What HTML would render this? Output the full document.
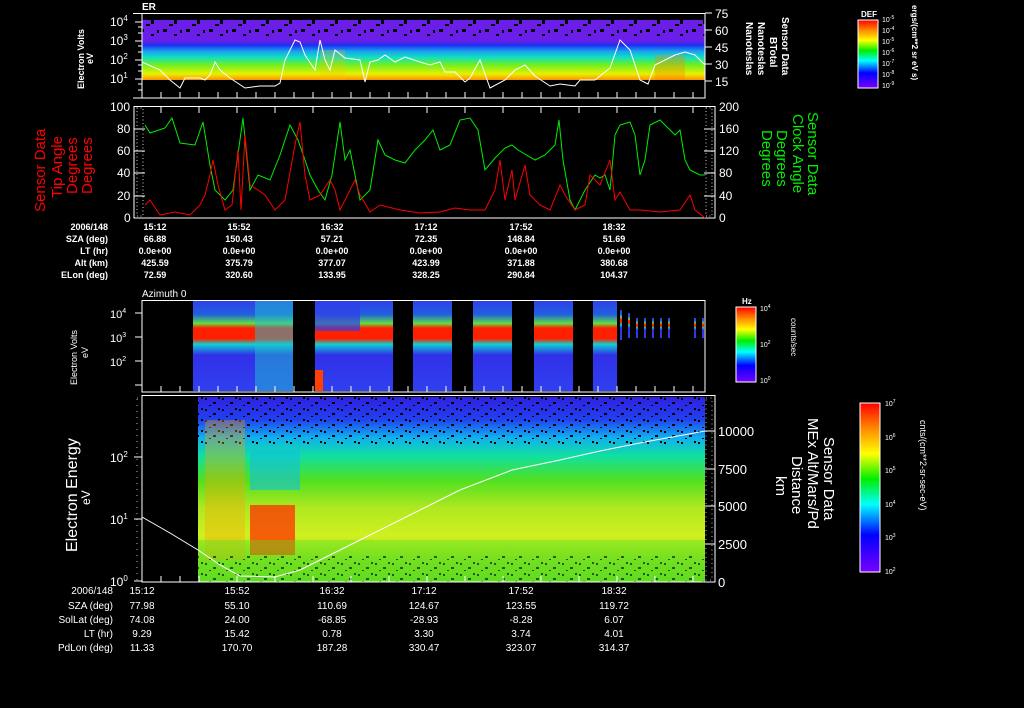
<!DOCTYPE html>
<html><head><meta charset="utf-8"><style>
html,body{margin:0;padding:0;background:#000;width:1024px;height:708px;overflow:hidden}
svg{display:block}
text{font-family:"Liberation Sans",sans-serif;fill:#fff}
</style></head><body>
<svg width="1024" height="708" viewBox="0 0 1024 708" xmlns="http://www.w3.org/2000/svg">
<defs>
<linearGradient id="jet" x1="0" y1="0" x2="0" y2="1">
<stop offset="0" stop-color="#f00"/><stop offset=".15" stop-color="#f80"/><stop offset=".3" stop-color="#ff0"/><stop offset=".45" stop-color="#0e0"/><stop offset=".6" stop-color="#0ff"/><stop offset=".78" stop-color="#00f"/><stop offset="1" stop-color="#70f"/>
</linearGradient>
<linearGradient id="p1" x1="0" y1="0" x2="0" y2="1">
<stop offset="0" stop-color="#6a1ee8"/><stop offset=".35" stop-color="#6a1ee8"/><stop offset=".42" stop-color="#1a30f0"/><stop offset=".52" stop-color="#1aa0f0"/><stop offset=".62" stop-color="#10e0c0"/><stop offset=".75" stop-color="#70f020"/><stop offset=".9" stop-color="#e8f000"/><stop offset="1" stop-color="#ff9000"/>
</linearGradient>
<linearGradient id="p4" x1="0" y1="0" x2="0" y2="1">
<stop offset="0" stop-color="#3020e0"/><stop offset=".12" stop-color="#2040f0"/><stop offset=".22" stop-color="#10b0f0"/><stop offset=".32" stop-color="#10e0a0"/><stop offset=".45" stop-color="#50e020"/><stop offset=".6" stop-color="#b0e820"/><stop offset=".75" stop-color="#d0f020"/><stop offset=".88" stop-color="#80e020"/><stop offset="1" stop-color="#60d820"/>
</linearGradient>
<linearGradient id="p3" x1="0" y1="0" x2="0" y2="1">
<stop offset="0" stop-color="#3040e8"/><stop offset=".15" stop-color="#2060e0"/><stop offset=".25" stop-color="#60e040"/><stop offset=".3" stop-color="#ff2000"/><stop offset=".42" stop-color="#ff2000"/><stop offset=".48" stop-color="#10d0d0"/><stop offset=".6" stop-color="#3030e8"/><stop offset="1" stop-color="#3040f0"/>
</linearGradient>
<pattern id="spk" width="23" height="14" patternUnits="userSpaceOnUse">
<rect x="2" y="1" width="4" height="3" fill="#000"/><rect x="13" y="6" width="3" height="4" fill="#000"/><rect x="8" y="10" width="4" height="2" fill="#000"/><rect x="19" y="2" width="2" height="3" fill="#000"/>
</pattern>
<pattern id="spk2" width="17" height="11" patternUnits="userSpaceOnUse">
<rect x="1" y="2" width="2" height="2" fill="#000"/><rect x="9" y="6" width="3" height="2" fill="#000"/><rect x="14" y="1" width="2" height="2" fill="#000"/><rect x="5" y="9" width="2" height="1" fill="#000"/>
</pattern>
</defs>

<!-- Panel 1 -->
<text x="142" y="10" font-size="10" font-weight="bold">ER</text>
<rect x="142" y="20" width="563" height="60" fill="url(#p1)"/>
<rect x="142" y="16" width="563" height="20" fill="url(#spk)"/>
<rect x="142" y="13" width="563" height="5" fill="#000" opacity=".5"/>
<rect x="320" y="50" width="25" height="30" fill="#ffc000" opacity=".25"/>
<rect x="655" y="55" width="30" height="25" fill="#ff8000" opacity=".35"/>
<polyline fill="none" stroke="#fff" stroke-width="1" points="142,62 160,70 170,80 180,88 185,78 200,78 205,80 210,75 215,62 220,70 230,78 245,88 260,86 275,86 280,83 285,60 295,40 300,42 305,55 315,70 320,40 325,60 330,70 335,50 345,58 360,60 365,82 370,62 378,60 385,55 395,62 405,57 420,62 430,65 440,62 445,72 455,72 465,82 470,78 480,60 490,88 505,80 515,70 525,65 535,76 550,86 560,84 575,86 580,80 595,80 610,68 620,40 630,50 640,80 648,84 655,65 665,60 675,55 685,52 695,55 705,65"/>
<rect x="142" y="13.5" width="563" height="84.5" fill="none" stroke="#fff"/>
<g stroke="#fff">
<line x1="133" y1="13.5" x2="142" y2="13.5"/><line x1="133" y1="98" x2="142" y2="98"/>
<line x1="135" y1="22" x2="142" y2="22"/><line x1="135" y1="41" x2="142" y2="41"/><line x1="135" y1="60" x2="142" y2="60"/><line x1="135" y1="79" x2="142" y2="79"/>
<line x1="138" y1="27" x2="142" y2="27"/><line x1="138" y1="33" x2="142" y2="33"/><line x1="138" y1="46" x2="142" y2="46"/><line x1="138" y1="52" x2="142" y2="52"/><line x1="138" y1="65" x2="142" y2="65"/><line x1="138" y1="71" x2="142" y2="71"/><line x1="138" y1="84" x2="142" y2="84"/><line x1="138" y1="90" x2="142" y2="90"/>
<line x1="705" y1="13" x2="712" y2="13"/><line x1="705" y1="30" x2="712" y2="30"/><line x1="705" y1="47" x2="712" y2="47"/><line x1="705" y1="64" x2="712" y2="64"/><line x1="705" y1="81" x2="712" y2="81"/>
</g>
<g stroke="#fff"><line x1="161" y1="98" x2="161" y2="92"/><line x1="180" y1="98" x2="180" y2="92"/><line x1="199" y1="98" x2="199" y2="92"/><line x1="218" y1="98" x2="218" y2="92"/><line x1="237" y1="98" x2="237" y2="92"/><line x1="256" y1="98" x2="256" y2="92"/><line x1="275" y1="98" x2="275" y2="92"/><line x1="294" y1="98" x2="294" y2="92"/><line x1="313" y1="98" x2="313" y2="92"/><line x1="332" y1="98" x2="332" y2="92"/><line x1="351" y1="98" x2="351" y2="92"/><line x1="370" y1="98" x2="370" y2="92"/><line x1="389" y1="98" x2="389" y2="92"/><line x1="408" y1="98" x2="408" y2="92"/><line x1="427" y1="98" x2="427" y2="92"/><line x1="446" y1="98" x2="446" y2="92"/><line x1="465" y1="98" x2="465" y2="92"/><line x1="484" y1="98" x2="484" y2="92"/><line x1="503" y1="98" x2="503" y2="92"/><line x1="522" y1="98" x2="522" y2="92"/><line x1="541" y1="98" x2="541" y2="92"/><line x1="560" y1="98" x2="560" y2="92"/><line x1="579" y1="98" x2="579" y2="92"/><line x1="598" y1="98" x2="598" y2="92"/><line x1="617" y1="98" x2="617" y2="92"/><line x1="636" y1="98" x2="636" y2="92"/><line x1="655" y1="98" x2="655" y2="92"/><line x1="674" y1="98" x2="674" y2="92"/><line x1="693" y1="98" x2="693" y2="92"/></g>
<g font-size="12"><text x="110" y="26">10<tspan font-size="8" dy="-5">4</tspan></text><text x="110" y="45">10<tspan font-size="8" dy="-5">3</tspan></text><text x="110" y="64">10<tspan font-size="8" dy="-5">2</tspan></text><text x="110" y="83">10<tspan font-size="8" dy="-5">1</tspan></text></g>
<g font-size="12"><text x="715" y="18">75</text><text x="715" y="35">60</text><text x="715" y="52">45</text><text x="715" y="69">30</text><text x="715" y="86">15</text></g>
<text transform="translate(84,89) rotate(-90)" font-size="9" font-weight="bold">Electron Volts</text>
<text transform="translate(93,64) rotate(-90)" font-size="9" font-weight="bold">eV</text>
<g font-size="10" font-weight="bold">
<text transform="translate(782,17) rotate(90)">Sensor Data</text>
<text transform="translate(770,37) rotate(90)">BTotal</text>
<text transform="translate(758,22) rotate(90)">Nanoteslas</text>
<text transform="translate(746,22) rotate(90)">Nanoteslas</text>
</g>
<rect x="858" y="20" width="20" height="68" fill="url(#jet)" stroke="#fff"/>
<text x="861" y="17" font-size="8" font-weight="bold">DEF</text>
<g font-size="7"><text x="882" y="22">10<tspan font-size="5" dy="-3">-5</tspan></text><text x="882" y="33">10<tspan font-size="5" dy="-3">-4</tspan></text><text x="882" y="44">10<tspan font-size="5" dy="-3">-5</tspan></text><text x="882" y="55">10<tspan font-size="5" dy="-3">-6</tspan></text><text x="882" y="66">10<tspan font-size="5" dy="-3">-7</tspan></text><text x="882" y="77">10<tspan font-size="5" dy="-3">-8</tspan></text><text x="882" y="88">10<tspan font-size="5" dy="-3">-9</tspan></text></g>
<text transform="translate(912,5) rotate(90)" font-size="8" font-weight="bold">ergs/(cm**2 sr eV s)</text>

<!-- Panel 2 -->
<rect x="134" y="106.5" width="581" height="111.5" fill="none" stroke="#fff"/>
<g stroke="#fff">
<line x1="134" y1="129" x2="145" y2="129"/><line x1="134" y1="151" x2="145" y2="151"/><line x1="134" y1="173" x2="145" y2="173"/><line x1="134" y1="196" x2="145" y2="196"/>
<line x1="704" y1="129" x2="715" y2="129"/><line x1="704" y1="151" x2="715" y2="151"/><line x1="704" y1="173" x2="715" y2="173"/><line x1="704" y1="196" x2="715" y2="196"/>
</g>
<rect x="137" y="108" width="6" height="108" fill="none" stroke="#fff" stroke-dasharray="1 2.5" opacity=".8"/>
<rect x="706" y="108" width="6" height="108" fill="none" stroke="#fff" stroke-dasharray="1 2.5" opacity=".8"/>
<g stroke="#fff"><line x1="161" y1="107" x2="161" y2="113"/><line x1="199" y1="107" x2="199" y2="113"/><line x1="237" y1="107" x2="237" y2="113"/><line x1="275" y1="107" x2="275" y2="113"/><line x1="313" y1="107" x2="313" y2="113"/><line x1="351" y1="107" x2="351" y2="113"/><line x1="389" y1="107" x2="389" y2="113"/><line x1="427" y1="107" x2="427" y2="113"/><line x1="465" y1="107" x2="465" y2="113"/><line x1="503" y1="107" x2="503" y2="113"/><line x1="541" y1="107" x2="541" y2="113"/><line x1="579" y1="107" x2="579" y2="113"/><line x1="617" y1="107" x2="617" y2="113"/><line x1="655" y1="107" x2="655" y2="113"/><line x1="693" y1="107" x2="693" y2="113"/></g>
<polyline fill="none" stroke="#0e0" stroke-width="1" points="145,125 150,133 165,128 172,118 180,143 195,145 203,122 210,165 215,190 225,200 233,190 243,118 250,190 258,175 270,180 280,155 290,125 298,140 305,160 310,175 318,190 325,200 332,175 340,122 345,160 350,150 360,200 370,190 378,140 385,155 395,160 405,163 415,150 425,140 433,130 440,150 450,145 460,120 470,118 478,130 485,170 495,158 505,148 512,145 518,150 535,160 545,155 555,145 559,120 563,160 570,200 575,210 585,190 595,175 600,178 605,175 610,190 615,135 620,125 630,122 635,135 640,175 645,160 650,125 660,120 670,130 675,135 680,130 685,160 690,170 700,175 705,175"/>
<polyline fill="none" stroke="#f00" stroke-width="1" points="145,205 150,200 160,215 175,212 190,215 200,205 205,195 210,175 213,160 218,185 225,210 232,205 238,150 241,210 245,135 250,185 258,190 265,195 275,210 285,200 295,145 300,122 305,175 310,200 320,195 330,180 335,190 340,210 355,180 360,195 370,212 380,205 400,210 420,213 440,212 455,208 470,210 485,210 495,190 500,160 505,200 512,170 515,200 525,165 530,195 540,205 550,210 560,185 565,195 575,210 585,205 590,175 600,185 610,160 615,200 620,192 630,210 640,210 660,212 680,210 690,195 695,210 705,218"/>
<g font-size="12"><text x="110" y="111">100</text><text x="117" y="133">80</text><text x="117" y="155">60</text><text x="117" y="177">40</text><text x="117" y="200">20</text><text x="124" y="222">0</text></g>
<g font-size="12"><text x="719" y="111">200</text><text x="719" y="133">160</text><text x="719" y="155">120</text><text x="719" y="177">80</text><text x="719" y="200">40</text><text x="719" y="222">0</text></g>
<g font-size="15" fill="#f00">
<text transform="translate(45,212) rotate(-90)" style="fill:#f00">Sensor Data</text>
<text transform="translate(62,198) rotate(-90)" style="fill:#f00">Tip Angle</text>
<text transform="translate(77,194) rotate(-90)" style="fill:#f00">Degrees</text>
<text transform="translate(92,194) rotate(-90)" style="fill:#f00">Degrees</text>
</g>
<g font-size="15">
<text transform="translate(808,112) rotate(90)" style="fill:#0e0">Sensor Data</text>
<text transform="translate(793,114) rotate(90)" style="fill:#0e0">Clock Angle</text>
<text transform="translate(777,130) rotate(90)" style="fill:#0e0">Degrees</text>
<text transform="translate(762,130) rotate(90)" style="fill:#0e0">Degrees</text>
</g>
<g font-size="9" font-weight="bold">
<text x="108" y="230" text-anchor="end">2006/148</text><text x="108" y="242" text-anchor="end">SZA (deg)</text><text x="108" y="254" text-anchor="end">LT (hr)</text><text x="108" y="266" text-anchor="end">Alt (km)</text><text x="108" y="278" text-anchor="end">ELon (deg)</text>
<g text-anchor="middle">
<text x="155" y="230">15:12</text><text x="155" y="242">66.88</text><text x="155" y="254">0.0e+00</text><text x="155" y="266">425.59</text><text x="155" y="278">72.59</text>
<text x="239" y="230">15:52</text><text x="239" y="242">150.43</text><text x="239" y="254">0.0e+00</text><text x="239" y="266">375.79</text><text x="239" y="278">320.60</text>
<text x="332" y="230">16:32</text><text x="332" y="242">57.21</text><text x="332" y="254">0.0e+00</text><text x="332" y="266">377.07</text><text x="332" y="278">133.95</text>
<text x="426" y="230">17:12</text><text x="426" y="242">72.35</text><text x="426" y="254">0.0e+00</text><text x="426" y="266">423.99</text><text x="426" y="278">328.25</text>
<text x="521" y="230">17:52</text><text x="521" y="242">148.84</text><text x="521" y="254">0.0e+00</text><text x="521" y="266">371.88</text><text x="521" y="278">290.84</text>
<text x="614" y="230">18:32</text><text x="614" y="242">51.69</text><text x="614" y="254">0.0e+00</text><text x="614" y="266">380.68</text><text x="614" y="278">104.37</text>
</g></g>

<!-- Panel 3 -->
<text x="142" y="297" font-size="10">Azimuth 0</text>
<g fill="url(#p3)">
<rect x="193" y="301" width="100" height="90"/><rect x="315" y="301" width="78" height="90"/><rect x="413" y="301" width="39" height="90"/><rect x="473" y="301" width="39" height="90"/><rect x="534" y="301" width="39" height="90"/><rect x="593" y="301" width="24" height="90"/>
</g>
<rect x="255" y="301" width="38" height="90" fill="#20c0d0" opacity=".5"/>
<rect x="315" y="301" width="45" height="30" fill="#3040e8" opacity=".7"/>
<rect x="315" y="370" width="8" height="21" fill="#ff4000"/>
<g fill="url(#p3)"><rect x="620" y="310" width="2" height="30"/><rect x="628" y="313" width="2" height="25"/><rect x="636" y="318" width="2" height="20"/><rect x="644" y="318" width="2" height="20"/><rect x="652" y="318" width="2" height="20"/><rect x="660" y="318" width="2" height="20"/><rect x="668" y="318" width="2" height="20"/><rect x="694" y="318" width="2" height="20"/><rect x="702" y="318" width="2" height="20"/></g>
<rect x="142" y="300.5" width="563" height="91.5" fill="none" stroke="#fff"/>
<g stroke="#fff"><line x1="135" y1="313" x2="142" y2="313"/><line x1="135" y1="337" x2="142" y2="337"/><line x1="135" y1="361" x2="142" y2="361"/><line x1="135" y1="385" x2="142" y2="385"/></g>
<g stroke="#fff"><line x1="161" y1="392" x2="161" y2="386"/><line x1="180" y1="392" x2="180" y2="386"/><line x1="199" y1="392" x2="199" y2="386"/><line x1="218" y1="392" x2="218" y2="386"/><line x1="237" y1="392" x2="237" y2="386"/><line x1="256" y1="392" x2="256" y2="386"/><line x1="275" y1="392" x2="275" y2="386"/><line x1="294" y1="392" x2="294" y2="386"/><line x1="313" y1="392" x2="313" y2="386"/><line x1="332" y1="392" x2="332" y2="386"/><line x1="351" y1="392" x2="351" y2="386"/><line x1="370" y1="392" x2="370" y2="386"/><line x1="389" y1="392" x2="389" y2="386"/><line x1="408" y1="392" x2="408" y2="386"/><line x1="427" y1="392" x2="427" y2="386"/><line x1="446" y1="392" x2="446" y2="386"/><line x1="465" y1="392" x2="465" y2="386"/><line x1="484" y1="392" x2="484" y2="386"/><line x1="503" y1="392" x2="503" y2="386"/><line x1="522" y1="392" x2="522" y2="386"/><line x1="541" y1="392" x2="541" y2="386"/><line x1="560" y1="392" x2="560" y2="386"/><line x1="579" y1="392" x2="579" y2="386"/><line x1="598" y1="392" x2="598" y2="386"/><line x1="617" y1="392" x2="617" y2="386"/><line x1="636" y1="392" x2="636" y2="386"/><line x1="655" y1="392" x2="655" y2="386"/><line x1="674" y1="392" x2="674" y2="386"/><line x1="693" y1="392" x2="693" y2="386"/></g>
<g font-size="11"><text x="110" y="318">10<tspan font-size="7" dy="-5">4</tspan></text><text x="110" y="342">10<tspan font-size="7" dy="-5">3</tspan></text><text x="110" y="366">10<tspan font-size="7" dy="-5">2</tspan></text></g>
<text transform="translate(77,385) rotate(-90)" font-size="9">Electron Volts</text>
<text transform="translate(88,358) rotate(-90)" font-size="9">eV</text>
<rect x="736" y="307" width="20" height="75" fill="url(#jet)" stroke="#fff"/>
<text x="742" y="304" font-size="8" font-weight="bold">Hz</text>
<g font-size="7"><text x="760" y="311">10<tspan font-size="5" dy="-3">4</tspan></text><text x="760" y="347">10<tspan font-size="5" dy="-3">2</tspan></text><text x="760" y="383">10<tspan font-size="5" dy="-3">0</tspan></text></g>
<text transform="translate(791,318) rotate(90)" font-size="8">counts/sec</text>

<!-- Panel 4 -->
<rect x="198" y="397" width="507" height="185" fill="url(#p4)"/>
<rect x="198" y="397" width="507" height="48" fill="url(#spk2)"/>
<rect x="250" y="450" width="50" height="40" fill="#10c0e0" opacity=".6"/>
<rect x="250" y="505" width="45" height="50" fill="#ff3000" opacity=".75"/>
<rect x="205" y="420" width="40" height="140" fill="#ffa000" opacity=".35"/>
<rect x="198" y="540" width="507" height="42" fill="#60e020" opacity=".4"/>
<rect x="198" y="555" width="507" height="27" fill="url(#spk2)" opacity=".6"/>
<polyline fill="none" stroke="#fff" stroke-width="1" points="142,517 170,533 198,550 220,565 240,576 275,577 300,570 330,555 370,535 400,520 430,505 460,490 512,470 560,460 600,451 650,441 700,432 705,431"/>
<rect x="142" y="395.5" width="573" height="186.5" fill="none" stroke="#fff"/>
<g stroke="#fff"><line x1="134" y1="457" x2="142" y2="457"/><line x1="134" y1="519" x2="142" y2="519"/><line x1="134" y1="581" x2="142" y2="581"/>
<line x1="705" y1="431" x2="715" y2="431"/><line x1="705" y1="469" x2="715" y2="469"/><line x1="705" y1="506" x2="715" y2="506"/><line x1="705" y1="544" x2="715" y2="544"/></g>
<rect x="137" y="398" width="5" height="182" fill="none" stroke="#fff" stroke-dasharray="1 5" opacity=".7"/>
<rect x="706" y="398" width="6" height="182" fill="none" stroke="#fff" stroke-dasharray="1 3.5" opacity=".7"/>
<g stroke="#fff"><line x1="161" y1="582" x2="161" y2="576"/><line x1="180" y1="582" x2="180" y2="576"/><line x1="199" y1="582" x2="199" y2="576"/><line x1="237" y1="582" x2="237" y2="576"/><line x1="275" y1="582" x2="275" y2="576"/><line x1="313" y1="582" x2="313" y2="576"/><line x1="351" y1="582" x2="351" y2="576"/><line x1="389" y1="582" x2="389" y2="576"/><line x1="427" y1="582" x2="427" y2="576"/><line x1="465" y1="582" x2="465" y2="576"/><line x1="503" y1="582" x2="503" y2="576"/><line x1="541" y1="582" x2="541" y2="576"/><line x1="579" y1="582" x2="579" y2="576"/><line x1="617" y1="582" x2="617" y2="576"/><line x1="655" y1="582" x2="655" y2="576"/><line x1="693" y1="582" x2="693" y2="576"/></g>
<g font-size="12"><text x="110" y="462">10<tspan font-size="8" dy="-5">2</tspan></text><text x="110" y="524">10<tspan font-size="8" dy="-5">1</tspan></text><text x="110" y="586">10<tspan font-size="8" dy="-5">0</tspan></text></g>
<g font-size="13"><text x="718" y="436">10000</text><text x="718" y="474">7500</text><text x="718" y="511">5000</text><text x="718" y="549">2500</text><text x="718" y="587">0</text></g>
<text transform="translate(77,552) rotate(-90)" font-size="16">Electron Energy</text>
<text transform="translate(90,505) rotate(-90)" font-size="12">eV</text>
<g font-size="15">
<text transform="translate(824,437) rotate(90)">Sensor Data</text>
<text transform="translate(808,418) rotate(90)">MEx Alt/Mars/Pd</text>
<text transform="translate(792,456) rotate(90)">Distance</text>
<text transform="translate(776,476) rotate(90)">km</text>
</g>
<rect x="860" y="403" width="20" height="169" fill="url(#jet)" stroke="#fff"/>
<g font-size="7"><text x="885" y="406">10<tspan font-size="5" dy="-3">7</tspan></text><text x="885" y="440">10<tspan font-size="5" dy="-3">6</tspan></text><text x="885" y="473">10<tspan font-size="5" dy="-3">5</tspan></text><text x="885" y="507">10<tspan font-size="5" dy="-3">4</tspan></text><text x="885" y="540">10<tspan font-size="5" dy="-3">3</tspan></text><text x="885" y="574">10<tspan font-size="5" dy="-3">2</tspan></text></g>
<text transform="translate(920,420) rotate(90)" font-size="9">cnts/(cm**2-sr-sec-eV)</text>
<g font-size="10">
<text x="113" y="594" text-anchor="end">2006/148</text><text x="113" y="609" text-anchor="end">SZA (deg)</text><text x="113" y="623" text-anchor="end">SolLat (deg)</text><text x="113" y="637" text-anchor="end">LT (hr)</text><text x="113" y="651" text-anchor="end">PdLon (deg)</text>
<g text-anchor="middle">
<text x="142" y="594">15:12</text><text x="142" y="609">77.98</text><text x="142" y="623">74.08</text><text x="142" y="637">9.29</text><text x="142" y="651">11.33</text>
<text x="237" y="594">15:52</text><text x="237" y="609">55.10</text><text x="237" y="623">24.00</text><text x="237" y="637">15.42</text><text x="237" y="651">170.70</text>
<text x="332" y="594">16:32</text><text x="332" y="609">110.69</text><text x="332" y="623">-68.85</text><text x="332" y="637">0.78</text><text x="332" y="651">187.28</text>
<text x="424" y="594">17:12</text><text x="424" y="609">124.67</text><text x="424" y="623">-28.93</text><text x="424" y="637">3.30</text><text x="424" y="651">330.47</text>
<text x="521" y="594">17:52</text><text x="521" y="609">123.55</text><text x="521" y="623">-8.28</text><text x="521" y="637">3.74</text><text x="521" y="651">323.07</text>
<text x="614" y="594">18:32</text><text x="614" y="609">119.72</text><text x="614" y="623">6.07</text><text x="614" y="637">4.01</text><text x="614" y="651">314.37</text>
</g></g>
</svg>
</body></html>
